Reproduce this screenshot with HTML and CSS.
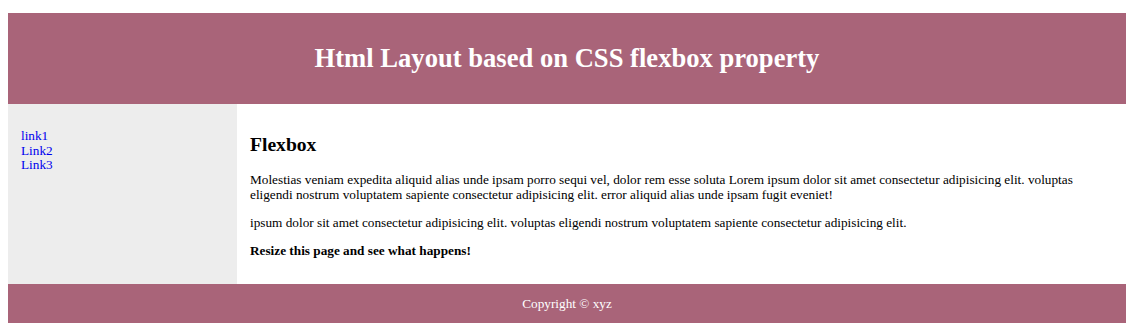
FILE: index.html
```html
<!DOCTYPE html>
<html>
<head>
<meta charset="utf-8">
<title>Flexbox Layout</title>
<link rel="stylesheet" href="styles.css">
</head>
<body>
<div class="page">
  <header class="site-header">
    <h1>Html Layout based on CSS flexbox property</h1>
  </header>
  <div class="middle">
    <nav class="side-nav">
      <ul>
        <li><a href="#">link1</a></li>
        <li><a href="#">Link2</a></li>
        <li><a href="#">Link3</a></li>
      </ul>
    </nav>
    <main class="content">
      <h2>Flexbox</h2>
      <p>Molestias veniam expedita aliquid alias unde ipsam porro sequi vel, dolor rem esse soluta Lorem ipsum dolor sit amet consectetur adipisicing elit. voluptas eligendi nostrum voluptatem sapiente consectetur adipisicing elit. error aliquid alias unde ipsam fugit eveniet!</p>
      <p>ipsum dolor sit amet consectetur adipisicing elit. voluptas eligendi nostrum voluptatem sapiente consectetur adipisicing elit.</p>
      <p><strong>Resize this page and see what happens!</strong></p>
    </main>
  </div>
  <footer class="site-footer">
    <p>Copyright &copy; xyz</p>
  </footer>
</div>
</body>
</html>
```
FILE: styles.css
```css
html, body {
  margin: 0;
  padding: 0;
  background: #ffffff;
}

body {
  font-family: "Liberation Serif", "Times New Roman", serif;
  font-size: 13.25px;
  line-height: 1.15;
  color: #000000;
  padding: 13px 8px 0 8px;
}

.page {
  width: 1118px;
}

.site-header {
  background: #a96479;
  color: #ffffff;
  padding: 13px;
  text-align: center;
}

.site-header h1 {
  margin: 17px 0;
  font-size: 26.6px;
  line-height: 31px;
  font-weight: bold;
}

.middle {
  display: flex;
}

.side-nav {
  flex: 0 0 229px;
  box-sizing: border-box;
  background: #ededed;
  padding: 13px;
}

.side-nav ul {
  list-style: none;
  margin: 12px 0;
  padding: 0;
}

.side-nav li {
  line-height: 14.7px;
}

.side-nav a {
  color: #0000ee;
  text-decoration: none;
}

.content {
  flex: 1;
  padding: 13px;
}

.content h2 {
  font-size: 19.6px;
  line-height: 23px;
  margin: 16px 0;
  font-weight: bold;
}

.content p {
  margin: 13px 0;
  line-height: 15px;
}

.site-footer {
  background: #a96479;
  color: #ffffff;
  text-align: center;
  padding: 12px;
}

.site-footer p {
  margin: 0;
  line-height: 15px;
}
```
